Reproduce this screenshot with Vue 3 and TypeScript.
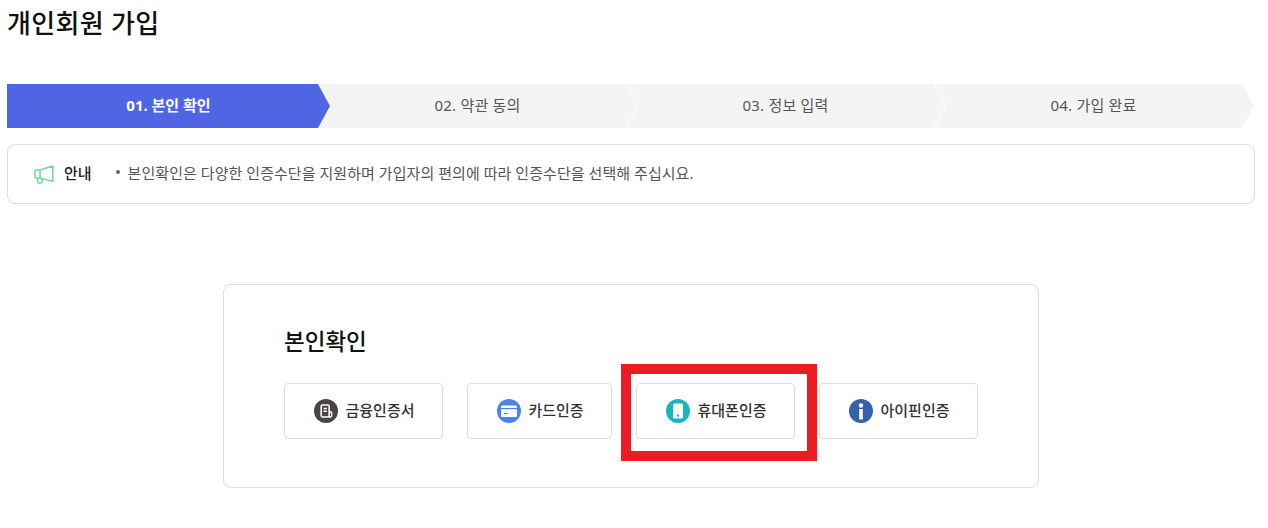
<script setup lang="ts">
interface Step {
  label: string;
  active?: boolean;
}

const steps: Step[] = [
  { label: '01. 본인 확인', active: true },
  { label: '02. 약관 동의' },
  { label: '03. 정보 입력' },
  { label: '04. 가입 완료' },
];
</script>

<template>
  <div class="page">
    <h1 class="title">개인회원 가입</h1>

    <ol class="steps">
      <li v-for="step in steps" :key="step.label" class="step" :class="{ active: step.active }">
        <span>{{ step.label }}</span>
        <svg v-if="!step.active" class="sep" width="13" height="44" viewBox="0 0 13 44">
          <polyline points="0.5,0 12,22 0.5,44" fill="none" stroke="#fff" stroke-width="1" />
        </svg>
      </li>
    </ol>

    <div class="notice">
      <svg class="horn" width="20" height="19" viewBox="0 0 20 19" fill="none" stroke="#6fd69a" stroke-width="1.5" stroke-linejoin="round">
        <path d="M2.2 5 L6 5 L18.8 1 L18.8 16.4 L6 13 L2.2 13 Q1 13 1 11.8 V6.2 Q1 5 2.2 5 Z" />
        <path d="M6 5 V13" />
        <path d="M3.6 13 V16.4 Q3.6 18 5.2 18 H6.6 Q8.2 18 8.2 16.4 V13.6" />
      </svg>
      <strong class="notice-label">안내</strong>
      <p class="notice-text"><i class="dot"></i>본인확인은 다양한 인증수단을 지원하며 가입자의 편의에 따라 인증수단을 선택해 주십시요.</p>
    </div>

    <section class="card">
      <h2 class="card-title">본인확인</h2>
      <div class="methods">
        <button class="method wide" type="button">
          <svg width="24" height="24" viewBox="0 0 24 24">
            <circle cx="12" cy="12" r="12" fill="#494543" />
            <rect x="7.2" y="6" width="8" height="12" rx="1.4" fill="none" stroke="#fff" stroke-width="1.6" />
            <path d="M9.5 9.5h3.4M9.5 12.2h3.4" stroke="#fff" stroke-width="1.4" />
            <path d="M15.5 13h1.4q.8 0 .8.8v2.6q0 1.6-1.6 1.6h-1.2" fill="none" stroke="#fff" stroke-width="1.3" />
          </svg>
          <span>금융인증서</span>
        </button>
        <button class="method" type="button">
          <svg width="24" height="24" viewBox="0 0 24 24">
            <circle cx="12" cy="12" r="12" fill="#4a83ec" />
            <rect x="4" y="6.5" width="16" height="11.5" rx="1.5" fill="#fff" />
            <rect x="4" y="9" width="16" height="1.2" fill="#4a83ec" />
            <rect x="7" y="14" width="3.6" height="1.2" fill="#4a83ec" />
          </svg>
          <span>카드인증</span>
        </button>
        <button class="method wide" type="button">
          <svg width="24" height="24" viewBox="0 0 24 24">
            <circle cx="12" cy="12" r="12" fill="#1ab6bf" />
            <rect x="7" y="4.5" width="10" height="15" rx="1.6" fill="#fff" />
            <rect x="11" y="15.5" width="2" height="2" fill="#1ab6bf" />
          </svg>
          <span>휴대폰인증</span>
        </button>
        <button class="method wide" type="button">
          <svg width="24" height="24" viewBox="0 0 24 24">
            <circle cx="12" cy="12" r="12" fill="#3560ab" />
            <circle cx="12" cy="6.5" r="2.2" fill="#fff" />
            <rect x="10.2" y="10" width="3.6" height="10.5" fill="#fff" />
          </svg>
          <span>아이핀인증</span>
        </button>
      </div>
    </section>

    <div class="highlight"></div>
  </div>
</template>

<style>
html,
body {
  margin: 0;
  background: #fff;
}
</style>

<style scoped>
.page {
  position: relative;
  width: 1268px;
  height: 528px;
  overflow: hidden;
  padding-left: 7px;
  box-sizing: border-box;
  font-family: "Noto Sans", "Noto Sans CJK KR", sans-serif;
  color: #222;
}

.title {
  margin: 0;
  padding-top: 5px;
  height: 84px;
  box-sizing: border-box;
  font-size: 26px;
  line-height: 36px;
  letter-spacing: 0.3px;
  font-weight: 500;
  color: #111;
}

.steps {
  display: flex;
  list-style: none;
  margin: 0;
  padding: 0;
  height: 44px;
}

.step {
  position: relative;
  flex: 0 0 320px;
  margin-left: -12px;
  display: flex;
  align-items: center;
  justify-content: center;
  padding: 0 1px 4px 0;
  box-sizing: border-box;
  font-size: 15px;
  letter-spacing: 0.2px;
  color: #555;
  background: #f4f4f4;
  clip-path: polygon(0 0, calc(100% - 12px) 0, 100% 50%, calc(100% - 12px) 100%, 0 100%);
}

.step.active {
  flex-basis: 323px;
  margin-left: 0;
  padding-right: 0;
  z-index: 1;
  letter-spacing: 0;
  font-weight: 700;
  color: #fff;
  background: #4f65e3;
}

.sep {
  position: absolute;
  left: 0;
  top: 0;
}

.notice {
  display: flex;
  align-items: center;
  width: 1248px;
  height: 60px;
  margin-top: 16px;
  padding-left: 26px;
  box-sizing: border-box;
  border: 1px solid #ddd;
  border-radius: 8px;
}

.horn {
  margin-right: 10px;
}

.notice-label {
  padding-bottom: 4px;
  font-size: 15px;
  font-weight: 500;
  color: #222;
  margin-right: 24px;
}

.notice-text {
  margin: 0;
  padding-bottom: 4px;
  display: flex;
  align-items: center;
  font-size: 15px;
  letter-spacing: 0.05px;
  color: #555;
}

.dot {
  width: 4px;
  height: 4px;
  margin-right: 8px;
  border-radius: 50%;
  background: #666;
}

.card {
  width: 816px;
  height: 204px;
  margin: 80px 0 0 216px;
  padding: 41px 60px 0;
  box-sizing: border-box;
  border: 1px solid #ddd;
  border-radius: 8px;
}

.card-title {
  margin: 0 0 25px;
  font-size: 22.5px;
  line-height: 32px;
  font-weight: 500;
  color: #111;
}

.methods {
  display: flex;
  gap: 24px;
}

.method {
  display: flex;
  align-items: center;
  justify-content: center;
  gap: 7px;
  width: 145px;
  height: 56px;
  padding: 0 0 0 2px;
  background: #fff;
  border: 1px solid #ddd;
  border-radius: 4px;
  font: inherit;
  font-size: 15px;
  font-weight: 500;
  color: #333;
}

.method span {
  padding-bottom: 4px;
}

.method.wide {
  width: 159px;
}

.highlight {
  position: absolute;
  left: 621px;
  top: 364px;
  width: 196px;
  height: 97px;
  box-sizing: border-box;
  border: 10px solid #ed1c24;
  pointer-events: none;
}
</style>
